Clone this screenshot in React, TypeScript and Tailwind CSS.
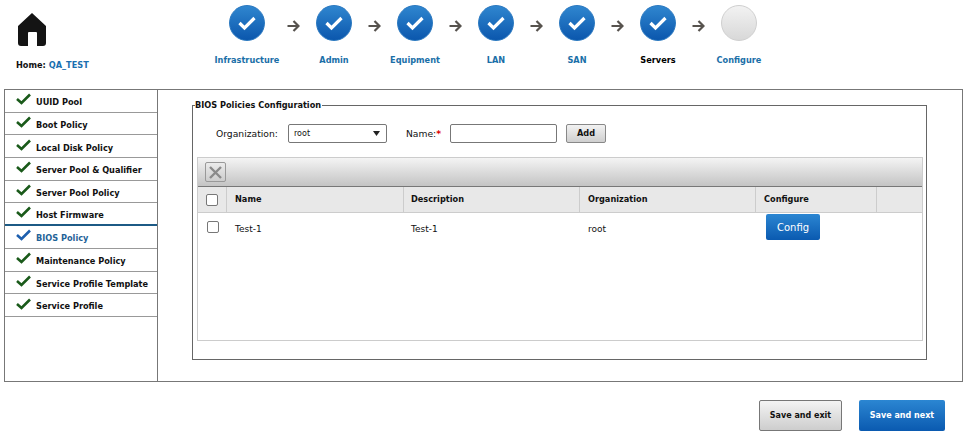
import React from 'react';

const HomeIcon = () => (
  <svg width="28" height="33" viewBox="0 0 28 33">
    <path d="M14 0 L28 13 V30 Q28 33 25 33 H19 V20 Q19 19 18 19 H11 Q10 19 10 20 V33 H3 Q0 33 0 30 V13 Z" fill="#141414" />
  </svg>
);

const Arrow = () => (
  <div className="w-[21px] h-[35px] flex items-center justify-center pt-[7px]">
    <svg width="13" height="12" viewBox="0 0 13 12">
      <path d="M0.5 6 H11 M6.5 1 L11.5 6 L6.5 11" fill="none" stroke="#57534e" strokeWidth="2.2" />
    </svg>
  </div>
);

const StepCircle = ({ done }: { done: boolean }) =>
  done ? (
    <div className="w-[36px] h-[36px] rounded-full bg-gradient-to-b from-[#2f86cf] to-[#0b57ad] border border-[#2a78c0] flex items-center justify-center">
      <svg width="20" height="16" viewBox="0 0 20 16">
        <path d="M2.5 8 L7.5 13 L17.5 3" fill="none" stroke="#ffffff" strokeWidth="3.2" />
      </svg>
    </div>
  ) : (
    <div className="w-[36px] h-[36px] rounded-full bg-gradient-to-b from-[#f2f2f2] to-[#d8d8d8] border border-[#cfcfcf]" />
  );

const steps = [
  { name: 'Infrastructure', w: 'w-[72px]', done: true },
  { name: 'Admin', w: 'w-[60px]', done: true },
  { name: 'Equipment', w: 'w-[60px]', done: true },
  { name: 'LAN', w: 'w-[60px]', done: true },
  { name: 'SAN', w: 'w-[60px]', done: true },
  { name: 'Servers', w: 'w-[60px]', done: true, current: true },
  { name: 'Configure', w: 'w-[60px]', done: false },
];

const sideItems = [
  'UUID Pool',
  'Boot Policy',
  'Local Disk Policy',
  'Server Pool & Qualifier',
  'Server Pool Policy',
  'Host Firmware',
  'BIOS Policy',
  'Maintenance Policy',
  'Service Profile Template',
  'Service Profile',
];

const Check = ({ color }: { color: string }) => (
  <svg width="15" height="12" viewBox="0 0 15 12" className="shrink-0">
    <path d="M1 6 L5.5 10 L14 1.5" fill="none" stroke={color} strokeWidth="2.6" />
  </svg>
);

const Box = () => <div className="w-[12px] h-[12px] rounded-[2px] border border-[#777] bg-white" />;

const App: React.FC = () => {
  return (
    <div className="w-[971px] h-[436px] bg-white overflow-hidden font-['DejaVu_Sans',sans-serif] text-[9px] text-[#111]">
      {/* top bar */}
      <div className="h-[89px] flex">
        <div className="w-[211px] pl-[16px] pt-[13px] shrink-0">
          <div className="pl-[2px] h-[34px]"><HomeIcon /></div>
          <div className="mt-[13px] font-bold text-[8.2px] leading-[11px]">
            Home: <span className="text-[#1a6fb0]">QA_TEST</span>
          </div>
        </div>
        <div className="flex items-start pt-[5px]">
          {steps.map((s, i) => (
            <React.Fragment key={s.name}>
              {i > 0 && <Arrow />}
              <div className={`${s.w} flex flex-col items-center`}>
                <StepCircle done={s.done} />
                <div className={`mt-[14px] font-bold text-[8.2px] leading-[11px] whitespace-nowrap ${s.current ? 'text-black' : 'text-[#1a6fa8]'}`}>{s.name}</div>
              </div>
            </React.Fragment>
          ))}
        </div>
      </div>

      {/* body */}
      <div className="h-[293px] ml-[4px] w-[959px] flex border border-[#777]">
        <div className="w-[153px] shrink-0 border-r border-[#777]">
          {sideItems.map((item, i) => {
            const active = item === 'BIOS Policy';
            return (
              <div
                key={item}
                className={`h-[22.7px] flex items-center gap-[5px] pl-[11px] pt-[3px] border-b font-bold text-[8.2px] whitespace-nowrap ${i === 5 ? 'border-b-[2px] border-[#1c5a85]' : 'border-[#999]'} ${active ? 'text-[#1f6398]' : ''}`}
              >
                <div className="-mt-[6px]"><Check color={active ? '#1d5fae' : '#1a5a1a'} /></div>
                <span>{item}</span>
              </div>
            );
          })}
        </div>

        <div className="flex-1 pl-[34px] pt-[10px]">
          <fieldset className="w-[735px] h-[260px] border border-[#666] p-0 min-w-0">
            <legend className="ml-[2px] pr-[1px] font-bold text-[8.2px] leading-[11px]">BIOS Policies Configuration</legend>

            <div className="flex items-center h-[19px] mt-[13px] pl-[23px] text-[9.2px]">
              <span className="w-[72px]">Organization:</span>
              <div className="w-[99px] h-[19px] border border-[#777] rounded-[2px] flex items-center justify-between pl-[5px] pr-[6px]">
                <span className="text-[8px]">root</span>
                <svg width="7" height="5" viewBox="0 0 7 5"><path d="M0 0 H7 L3.5 5 Z" fill="#222" /></svg>
              </div>
              <span className="ml-[19px] w-[44px]">Name:<span className="text-[#e00000] font-bold">*</span></span>
              <div className="w-[107px] h-[19px] border border-[#777] rounded-[2px]" />
              <button className="ml-[9px] w-[40px] h-[19px] border border-[#888] rounded-[2px] bg-gradient-to-b from-[#f2f2f2] to-[#cfcfcf] font-bold text-[8.2px]">Add</button>
            </div>

            <div className="mt-[14px] ml-[4px] w-[726px] h-[184px] border border-[#ccc]">
              <div className="h-[29px] bg-gradient-to-b from-[#f4f4f4] to-[#c4c4c4] border-b border-[#777] flex items-center pl-[7px]">
                <div className="w-[21px] h-[20px] border border-[#999] rounded-[2px] flex items-center justify-center">
                  <svg width="13" height="13" viewBox="0 0 13 13"><path d="M1 1 L12 12 M12 1 L1 12" stroke="#8a8a8a" strokeWidth="2.4" /></svg>
                </div>
              </div>
              <div className="h-[26px] bg-[#e8e8e8] border-b border-[#ccc] flex font-bold text-[8.2px]">
                <div className="w-[29px] flex items-center justify-center border-r border-[#ccc]"><Box /></div>
                <div className="w-[177px] flex items-center pl-[8px] border-r border-[#ccc]">Name</div>
                <div className="w-[176px] flex items-center pl-[7px] border-r border-[#ccc]">Description</div>
                <div className="w-[176px] flex items-center pl-[8px] border-r border-[#ccc]">Organization</div>
                <div className="w-[121px] flex items-center pl-[8px] border-r border-[#ccc]">Configure</div>
              </div>
              <div className="flex h-[30px] pt-[1px]">
                <div className="w-[29px] flex justify-center pt-[7px]"><Box /></div>
                <div className="w-[177px] pl-[8px] pt-[9px]">Test-1</div>
                <div className="w-[176px] pl-[7px] pt-[9px]">Test-1</div>
                <div className="w-[176px] pl-[8px] pt-[9px]">root</div>
                <div className="w-[121px] pl-[10px]">
                  <button className="w-[54px] h-[26px] rounded-[2px] bg-gradient-to-b from-[#2b86d2] to-[#0a5ab0] text-white text-[10px]">Config</button>
                </div>
              </div>
            </div>
          </fieldset>
        </div>
      </div>

      {/* footer */}
      <div className="flex justify-end gap-[17px] pr-[26px] mt-[18px]">
        <button className="w-[83px] h-[31px] border border-[#777] rounded-[2px] bg-gradient-to-b from-[#f4f4f4] to-[#cdcdcd] font-bold text-[8px]">Save and exit</button>
        <button className="w-[86px] h-[31px] rounded-[2px] bg-gradient-to-b from-[#2b86d2] to-[#0a5ab0] text-white font-bold text-[8px]">Save and next</button>
      </div>
    </div>
  );
};

export default App;
